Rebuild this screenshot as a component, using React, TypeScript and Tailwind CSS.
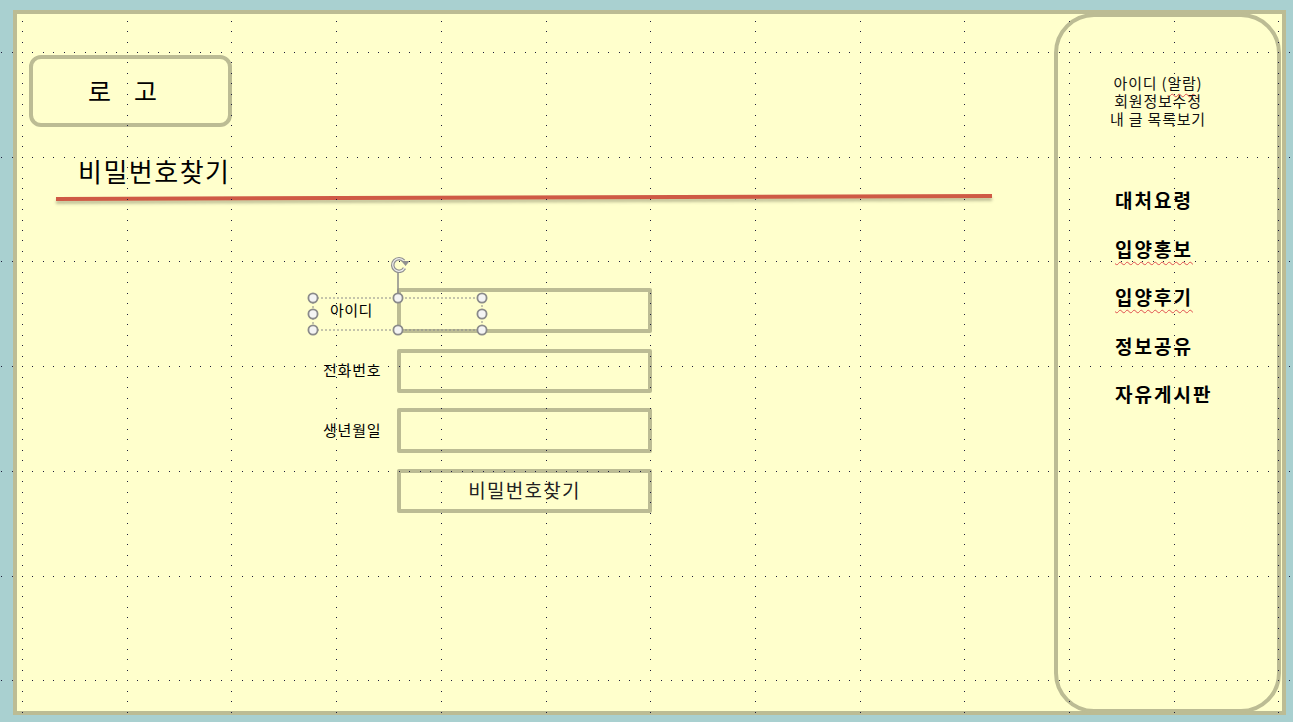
import React from "react"

const font = { fontFamily: '"Noto Sans CJK KR", "Noto Sans", sans-serif' }

// 점선 그리드 (슬라이드 안내선)
function GridDots() {
	const dots: { x: number; y: number }[] = []
	for (let k = 0; k <= 12; k++) {
		const x = Math.round(22 + 104.7 * k)
		for (let n = -3; n <= 63; n++) dots.push({ x, y: Math.round(52 + 10.47 * n) })
	}
	for (let j = 0; j <= 6; j++) {
		const y = Math.round(52 + 104.7 * j)
		for (let m = -2; m <= 121; m++) dots.push({ x: Math.round(22 + 10.47 * m), y })
	}
	return (
		<svg className="absolute inset-0 pointer-events-none" width={1293} height={722}>
			{dots.map((d, i) => (
				<rect key={i} x={d.x} y={d.y} width={1} height={1} fill="#1c1c3a" />
			))}
		</svg>
	)
}

// 선택된 텍스트 상자 핸들
function SelectionOverlay() {
	const xs = [8, 93, 177]
	const ys = [45, 61, 77]
	const handles: [number, number][] = []
	xs.forEach((x) =>
		ys.forEach((y) => {
			if (!(x === 93 && y === 61)) handles.push([x, y])
		}),
	)
	const ring = "M 99.46 15.15 A 6.3 6.3 0 1 1 98.83 7.95"
	return (
		<svg
			className="absolute left-[-8px] top-[-35px] pointer-events-none"
			width={190}
			height={90}
		>
			<rect
				x={8}
				y={45}
				width={169}
				height={32}
				fill="none"
				stroke="#8a8a8a"
				strokeWidth={1}
				strokeDasharray="2 2"
			/>
			<line x1={93} y1={19} x2={93} y2={45} stroke="#8a8a8a" strokeWidth={1.5} />
			<path d={ring} fill="none" stroke="#909090" strokeWidth={3.6} />
			<path d={ring} fill="none" stroke="#eeeeee" strokeWidth={1.2} />
			<polygon points="96.3,8 104.5,8 100.6,13" fill="#909090" />
			{handles.map(([x, y], i) => (
				<circle key={i} cx={x} cy={y} r={4.6} fill="#f4f4f4" stroke="#8a8a8a" strokeWidth={1.8} />
			))}
		</svg>
	)
}

const inputBox = "w-[255px] h-full border-4 border-[#bcbc94] rounded-[2px]"

function App() {
	const menus = ["대처요령", "입양홍보", "입양후기", "정보공유", "자유게시판"]
	const wavy = "underline decoration-wavy decoration-[#e05050] decoration-1 underline-offset-[4px]"

	return (
		<div className="relative w-[1293px] h-[722px] overflow-hidden bg-[#a9d0d0] pl-[13px] pt-[10px]" style={font}>
			<div className="w-[1273px] h-[705px] border-4 border-[#bcbc94] bg-[#ffffcc] flex text-black">
				{/* 왼쪽 본문 */}
				<div className="flex flex-col w-[1037px]">
					<div className="ml-[12px] mt-[41px] w-[203px] h-[72px] border-4 border-[#bcbc94] rounded-[12px] flex items-center pl-[55px] gap-[23px] text-[25px]">
						<span>로</span>
						<span>고</span>
					</div>

					<h1 className="ml-[61px] mt-[29px] h-[30px] leading-[30px] text-[26px] tracking-[1.5px]">
						비밀번호찾기
					</h1>

					<div className="ml-[39px] mt-[11px] w-[936px] h-[4px] bg-[#cf5a45] origin-left rotate-[-0.19deg] shadow-[0_3px_3px_rgba(120,120,90,0.45)]" />

					<form className="ml-[296px] mt-[87px] flex flex-col gap-[15.5px]">
						<div className="relative flex items-center h-[45px]">
							<label className="w-[84px] pl-[17px] text-[15px] tracking-[0.4px]">아이디</label>
							<div className={inputBox} />
							<SelectionOverlay />
						</div>
						<div className="flex items-center h-[44px]">
							<label className="w-[84px] pl-[10px] text-[15px] tracking-[0.8px]">전화번호</label>
							<div className={inputBox} />
						</div>
						<div className="flex items-center h-[45px]">
							<label className="w-[84px] pl-[10px] text-[15px] tracking-[0.8px]">생년월일</label>
							<div className={inputBox} />
						</div>
						<div className="flex items-center h-[44px]">
							<div className="w-[84px]" />
							<button
								type="button"
								className="w-[255px] h-full border-4 border-[#bcbc94] rounded-[2px] text-[19px] tracking-[1.3px] text-[#222] flex items-center justify-center"
							>
								비밀번호찾기
							</button>
						</div>
					</form>
				</div>

				{/* 오른쪽 메뉴 */}
				<aside className="-mt-px w-[227px] h-[700px] border-4 border-[#bcbc94] rounded-[40px] flex flex-col">
					<div className="mt-[57px] w-[200px] text-center text-[15px] tracking-[0.8px] leading-[18px] text-[#111]">
						<p>
							아이디 (<span className={wavy}>알람</span>)
						</p>
						<p>회원정보수정</p>
						<p>내 글 목록보기</p>
					</div>
					<ul className="mt-[48px] ml-[57px] flex flex-col">
						{menus.map((m, i) => (
							<li key={m} className="h-[48.5px] leading-[48.5px] text-[19px] font-bold tracking-[2px]">
								<span className={i === 1 || i === 2 ? wavy : ""}>{m}</span>
							</li>
						))}
					</ul>
				</aside>
			</div>
			<GridDots />
		</div>
	)
}

export default App
